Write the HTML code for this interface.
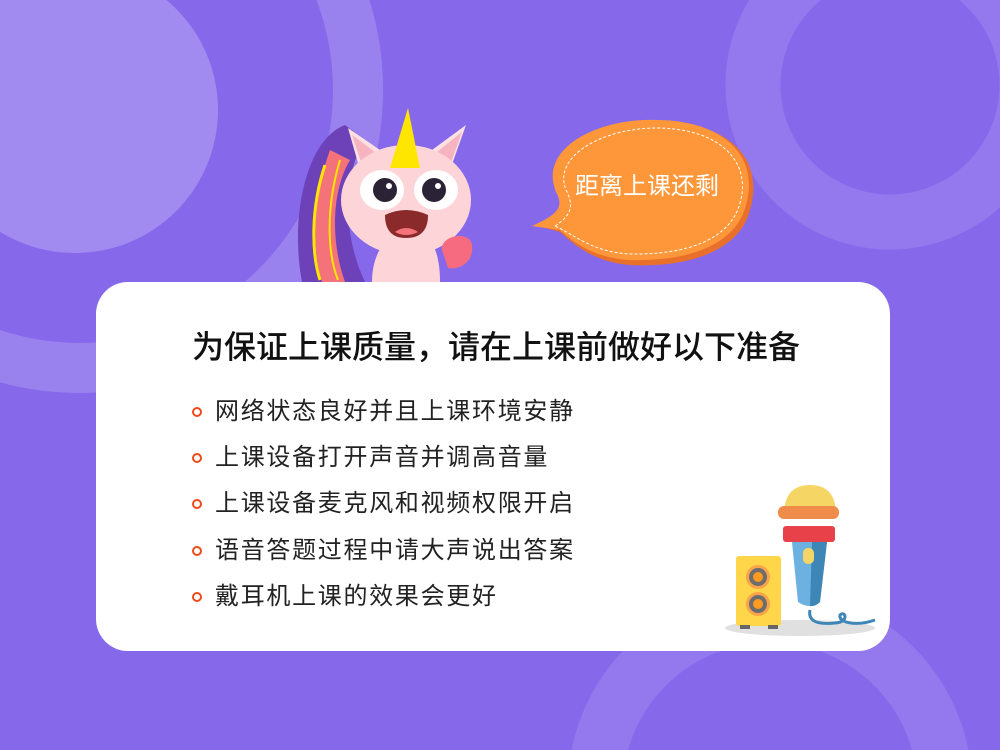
<!DOCTYPE html>
<html><head><meta charset="utf-8"><style>
html,body{margin:0;width:1000px;height:750px;overflow:hidden}
body{background:#8669ea;font-family:"Liberation Sans","Noto Sans CJK SC",sans-serif;position:relative}
.card{position:absolute;left:96px;top:282px;width:794px;height:369px;background:#fff;border-radius:32px}
h1{position:absolute;left:192px;top:325px;margin:0;font-size:32px;font-weight:500;color:#111;white-space:nowrap;line-height:44px}
.it{position:absolute;left:215px;font-size:24px;letter-spacing:1.7px;color:#222;white-space:nowrap;line-height:30px}
.b{position:absolute;left:192px;width:6px;height:6px;border:2px solid #f04a1a;border-radius:50%}
</style></head><body>
<svg width="1000" height="750" style="position:absolute;left:0;top:0">
<circle cx="75" cy="110" r="143" fill="#a28bf0"/>
<circle cx="80" cy="90" r="278" fill="none" stroke="#9a82ee" stroke-width="50"/>
<circle cx="890" cy="85" r="137" fill="none" stroke="#9378ee" stroke-width="55"/>
<circle cx="770" cy="790" r="175" fill="none" stroke="#9378ee" stroke-width="55"/>
<path d="M535 225 C560 215 570 210 560 195 C540 150 600 120 660 122 C730 122 765 160 750 210 C740 250 690 268 630 265 C590 262 570 240 560 232 Z" fill="#e8702a"/>
<path d="M532 226 C556 215 565 208 556 192 C538 148 598 118 656 120 C725 120 760 158 746 205 C736 245 688 262 628 260 C588 257 568 237 560 230 Z" fill="#fd973a"/>
<path d="M555 226 C572 215 574 205 566 190 C552 155 605 128 656 128 C720 128 752 162 740 203 C730 240 686 255 630 254 C592 252 575 235 555 226" fill="none" stroke="#fff" stroke-width="1" stroke-dasharray="3,2"/>
<text x="647" y="194" font-size="24" fill="#fff" text-anchor="middle" font-family="Liberation Sans,Noto Sans CJK SC,sans-serif">距离上课还剩</text>
<path d="M345 125 C305 140 290 220 302 282 L365 282 C345 240 340 180 365 140 Z" fill="#6d42b8"/>
<path d="M330 150 C312 200 312 250 322 282 L345 282 C330 240 332 190 350 160 Z" fill="#f4737a"/>
<path d="M325 165 C310 210 312 255 320 280" stroke="#ffe600" stroke-width="3" fill="none"/>
<path d="M340 160 C325 210 328 255 338 280" stroke="#ffe600" stroke-width="2" fill="none"/>
<path d="M372 282 C372 250 390 230 410 230 C430 230 440 250 440 282 Z" fill="#fdd5d8"/>
<path d="M348 128 L360 170 L380 150 Z" fill="#fde0e3"/><path d="M352 135 L362 165 L375 152 Z" fill="#f5b4bf"/>
<path d="M466 125 L450 170 L432 150 Z" fill="#fde0e3"/><path d="M462 132 L450 165 L437 152 Z" fill="#f5b4bf"/>
<ellipse cx="406" cy="200" rx="65" ry="55" fill="#fdd5d8"/>
<path d="M408 108 L390 168 L420 168 Z" fill="#ffe600"/>
<ellipse cx="382" cy="190" rx="22" ry="20" fill="#fff"/><ellipse cx="436" cy="190" rx="22" ry="20" fill="#fff"/>
<circle cx="385" cy="190" r="12" fill="#2b2235"/><circle cx="434" cy="190" r="12" fill="#2b2235"/>
<circle cx="389" cy="186" r="3" fill="#fff"/><circle cx="438" cy="186" r="3" fill="#fff"/>
<path d="M385 215 Q406 205 428 215 Q428 238 406 238 Q385 238 385 215 Z" fill="#8b2a2a"/>
<path d="M395 232 Q406 224 418 232 Q406 238 395 232 Z" fill="#f4737a"/>
<path d="M442 250 C440 235 470 230 472 245 C474 262 460 270 448 268 Z" fill="#f76b80"/>
</svg>
<div class="card"></div>
<h1>为保证上课质量，请在上课前做好以下准备</h1>
<div class="b" style="top:407px"></div><div class="it" style="top:397px">网络状态良好并且上课环境安静</div>
<div class="b" style="top:453px"></div><div class="it" style="top:443px">上课设备打开声音并调高音量</div>
<div class="b" style="top:499px"></div><div class="it" style="top:489px">上课设备麦克风和视频权限开启</div>
<div class="b" style="top:546px"></div><div class="it" style="top:536px">语音答题过程中请大声说出答案</div>
<div class="b" style="top:592px"></div><div class="it" style="top:582px">戴耳机上课的效果会更好</div>
<svg width="200" height="180" style="position:absolute;left:700px;top:470px" viewBox="0 0 200 180">
<ellipse cx="100" cy="158" rx="75" ry="8" fill="#e0e0e0"/>
<rect x="36" y="86" width="45" height="70" rx="3" fill="#ffd64a"/>
<rect x="40" y="155" width="10" height="4" fill="#666"/><rect x="68" y="155" width="10" height="4" fill="#666"/>
<circle cx="58" cy="107" r="12" fill="#f9a34a"/><circle cx="58" cy="107" r="9" fill="#6d6d6d"/><circle cx="58" cy="107" r="5" fill="#ff9a1f"/>
<circle cx="58" cy="134" r="12" fill="#f9a34a"/><circle cx="58" cy="134" r="9" fill="#6d6d6d"/><circle cx="58" cy="134" r="5" fill="#ff9a1f"/>
<path d="M110 140 C108 150 115 155 135 153 C150 152 145 140 140 145 C138 152 155 157 175 150" stroke="#3e86b5" stroke-width="3" fill="none"/>
<path d="M92 72 L127 72 L120 132 Q110 140 98 132 Z" fill="#6db1e0"/>
<path d="M112 72 L127 72 L120 132 Q115 137 110 136 Z" fill="#3e86b5"/>
<rect x="103" y="78" width="11" height="16" rx="5" fill="#f5d665"/>
<path d="M84 45 Q84 15 110 15 Q136 15 136 45 Z" fill="#f5d665"/>
<rect x="78" y="36" width="61" height="13" rx="6" fill="#f08c4a"/>
<rect x="83" y="56" width="52" height="16" rx="3" fill="#e8414a"/>
</svg>
</body></html>
